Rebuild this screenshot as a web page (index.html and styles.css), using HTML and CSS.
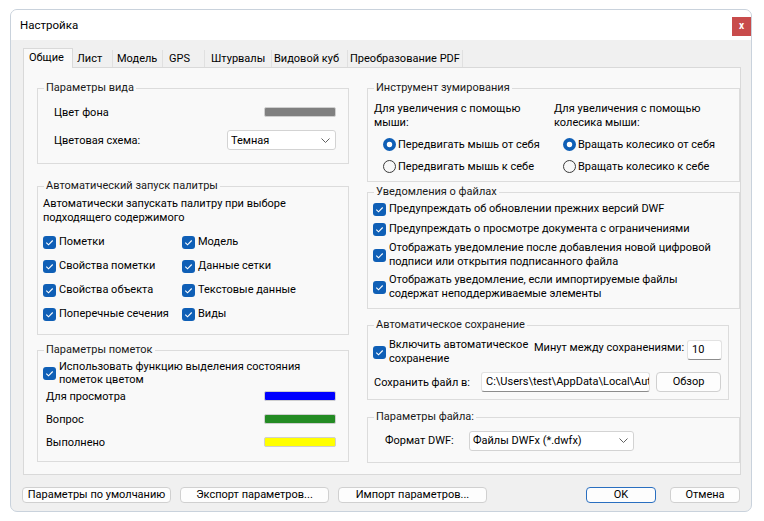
FILE: index.html
```html
<!DOCTYPE html>
<html>
<head>
    <title>Настройка</title>
    <link rel="stylesheet" href="styles.css">
</head>
<body>
<div class="dialog">
    <div class="titlebar">
        <span class="title">Настройка</span>
        <span class="close">x</span>
    </div>
    <div class="content">
        <div class="tabs">
            <span class="tab active t-general">Общие</span>
            <span class="tab t-sheet">Лист</span>
            <span class="tab t-model">Модель</span>
            <span class="tab t-gps">GPS</span>
            <span class="tab t-wheels">Штурвалы</span>
            <span class="tab t-cube">Видовой куб</span>
            <span class="tab t-pdf">Преобразование PDF</span>
        </div>
        <div class="panel">
            <div class="col col-left">
                <fieldset class="group g-view">
                    <legend>Параметры вида</legend>
                    <div class="gbody">
                        <div class="prow">
                            <span>Цвет фона</span>
                            <span class="swatch sw-grey"></span>
                        </div>
                        <div class="prow">
                            <span>Цветовая схема:</span>
                            <div class="select sel-scheme">Темная
                                <svg class="chev" width="9" height="5" viewBox="0 0 9 5"><path d="M.5.5 4.5 4.5 8.5.5" fill="none" stroke="#606060"/></svg>
                            </div>
                        </div>
                    </div>
                </fieldset>

                <fieldset class="group g-palette">
                    <legend>Автоматический запуск палитры</legend>
                    <div class="gbody">
                        <p class="desc">Автоматически запускать палитру при выборе подходящего содержимого</p>
                        <div class="cbgrid">
                            <label class="cbitem"><svg class="cb" width="13" height="13" viewBox="0 0 13 13"><rect width="13" height="13" rx="3" fill="#0f5fb6"/><path d="M3.3 6.7 5.5 8.8 9.7 4.5" fill="none" stroke="#fff" stroke-width="1.1"/></svg>Пометки</label>
                            <label class="cbitem"><svg class="cb" width="13" height="13" viewBox="0 0 13 13"><rect width="13" height="13" rx="3" fill="#0f5fb6"/><path d="M3.3 6.7 5.5 8.8 9.7 4.5" fill="none" stroke="#fff" stroke-width="1.1"/></svg>Модель</label>
                            <label class="cbitem"><svg class="cb" width="13" height="13" viewBox="0 0 13 13"><rect width="13" height="13" rx="3" fill="#0f5fb6"/><path d="M3.3 6.7 5.5 8.8 9.7 4.5" fill="none" stroke="#fff" stroke-width="1.1"/></svg>Свойства пометки</label>
                            <label class="cbitem"><svg class="cb" width="13" height="13" viewBox="0 0 13 13"><rect width="13" height="13" rx="3" fill="#0f5fb6"/><path d="M3.3 6.7 5.5 8.8 9.7 4.5" fill="none" stroke="#fff" stroke-width="1.1"/></svg>Данные сетки</label>
                            <label class="cbitem"><svg class="cb" width="13" height="13" viewBox="0 0 13 13"><rect width="13" height="13" rx="3" fill="#0f5fb6"/><path d="M3.3 6.7 5.5 8.8 9.7 4.5" fill="none" stroke="#fff" stroke-width="1.1"/></svg>Свойства объекта</label>
                            <label class="cbitem"><svg class="cb" width="13" height="13" viewBox="0 0 13 13"><rect width="13" height="13" rx="3" fill="#0f5fb6"/><path d="M3.3 6.7 5.5 8.8 9.7 4.5" fill="none" stroke="#fff" stroke-width="1.1"/></svg>Текстовые данные</label>
                            <label class="cbitem"><svg class="cb" width="13" height="13" viewBox="0 0 13 13"><rect width="13" height="13" rx="3" fill="#0f5fb6"/><path d="M3.3 6.7 5.5 8.8 9.7 4.5" fill="none" stroke="#fff" stroke-width="1.1"/></svg>Поперечные сечения</label>
                            <label class="cbitem"><svg class="cb" width="13" height="13" viewBox="0 0 13 13"><rect width="13" height="13" rx="3" fill="#0f5fb6"/><path d="M3.3 6.7 5.5 8.8 9.7 4.5" fill="none" stroke="#fff" stroke-width="1.1"/></svg>Виды</label>
                        </div>
                    </div>
                </fieldset>

                <fieldset class="group g-marks">
                    <legend>Параметры пометок</legend>
                    <div class="gbody">
                        <label class="cbitem cb-wrap"><svg class="cb" width="13" height="13" viewBox="0 0 13 13"><rect width="13" height="13" rx="3" fill="#0f5fb6"/><path d="M3.3 6.7 5.5 8.8 9.7 4.5" fill="none" stroke="#fff" stroke-width="1.1"/></svg><span>Использовать функцию выделения состояния<br>пометок цветом</span></label>
                        <div class="swrows">
                            <div class="prow">
                                <span>Для просмотра</span>
                                <span class="swatch sw-blue"></span>
                            </div>
                            <div class="prow">
                                <span>Вопрос</span>
                                <span class="swatch sw-green"></span>
                            </div>
                            <div class="prow">
                                <span>Выполнено</span>
                                <span class="swatch sw-yellow"></span>
                            </div>
                        </div>
                    </div>
                </fieldset>
            </div>

            <div class="col col-right">
                <fieldset class="group g-zoom">
                    <legend>Инструмент зумирования</legend>
                    <div class="gbody zoomcols">
                        <div class="zcol">
                            <p class="zhead">Для увеличения с помощью<br>мыши:</p>
                            <label class="rditem"><svg class="rd" width="13" height="13" viewBox="0 0 13 13"><circle cx="6.5" cy="6.5" r="6.5" fill="#0f5fb6"/><circle cx="6.5" cy="6.5" r="2.7" fill="#fff"/></svg>Передвигать мышь от себя</label>
                            <label class="rditem"><svg class="rd" width="13" height="13" viewBox="0 0 13 13"><circle cx="6.5" cy="6.5" r="6" fill="#f7f7f7" stroke="#3a3a3a"/></svg>Передвигать мышь к себе</label>
                        </div>
                        <div class="zcol">
                            <p class="zhead">Для увеличения с помощью<br>колесика мыши:</p>
                            <label class="rditem"><svg class="rd" width="13" height="13" viewBox="0 0 13 13"><circle cx="6.5" cy="6.5" r="6.5" fill="#0f5fb6"/><circle cx="6.5" cy="6.5" r="2.7" fill="#fff"/></svg>Вращать колесико от себя</label>
                            <label class="rditem"><svg class="rd" width="13" height="13" viewBox="0 0 13 13"><circle cx="6.5" cy="6.5" r="6" fill="#f7f7f7" stroke="#3a3a3a"/></svg>Вращать колесико к себе</label>
                        </div>
                    </div>
                </fieldset>

                <fieldset class="group g-notify">
                    <legend>Уведомления о файлах</legend>
                    <div class="gbody">
                        <label class="cbitem nrow"><svg class="cb" width="13" height="13" viewBox="0 0 13 13"><rect width="13" height="13" rx="3" fill="#0f5fb6"/><path d="M3.3 6.7 5.5 8.8 9.7 4.5" fill="none" stroke="#fff" stroke-width="1.1"/></svg><span>Предупреждать об обновлении прежних версий DWF</span></label>
                        <label class="cbitem nrow"><svg class="cb" width="13" height="13" viewBox="0 0 13 13"><rect width="13" height="13" rx="3" fill="#0f5fb6"/><path d="M3.3 6.7 5.5 8.8 9.7 4.5" fill="none" stroke="#fff" stroke-width="1.1"/></svg><span>Предупреждать о просмотре документа с ограничениями</span></label>
                        <label class="cbitem nrow nrow-2"><svg class="cb" width="13" height="13" viewBox="0 0 13 13"><rect width="13" height="13" rx="3" fill="#0f5fb6"/><path d="M3.3 6.7 5.5 8.8 9.7 4.5" fill="none" stroke="#fff" stroke-width="1.1"/></svg><span>Отображать уведомление после добавления новой цифровой<br>подписи или открытия подписанного файла</span></label>
                        <label class="cbitem nrow nrow-2"><svg class="cb" width="13" height="13" viewBox="0 0 13 13"><rect width="13" height="13" rx="3" fill="#0f5fb6"/><path d="M3.3 6.7 5.5 8.8 9.7 4.5" fill="none" stroke="#fff" stroke-width="1.1"/></svg><span>Отображать уведомление, если импортируемые файлы<br>содержат неподдерживаемые элементы</span></label>
                    </div>
                </fieldset>

                <fieldset class="group g-autosave">
                    <legend>Автоматическое сохранение</legend>
                    <div class="gbody">
                        <div class="asrow">
                            <label class="cbitem as-check"><svg class="cb" width="13" height="13" viewBox="0 0 13 13"><rect width="13" height="13" rx="3" fill="#0f5fb6"/><path d="M3.3 6.7 5.5 8.8 9.7 4.5" fill="none" stroke="#fff" stroke-width="1.1"/></svg><span>Включить автоматическое<br>сохранение</span></label>
                            <span class="as-minutes">Минут между сохранениями:</span>
                            <div class="field field-num">10</div>
                        </div>
                        <div class="pathrow">
                            <span class="path-label">Сохранить файл в:</span>
                            <div class="field field-path">C:\Users\test\AppData\Local\Aut</div>
                            <button class="btn btn-browse">Обзор</button>
                        </div>
                    </div>
                </fieldset>

                <fieldset class="group g-file">
                    <legend>Параметры файла:</legend>
                    <div class="gbody">
                        <div class="fmtrow">
                            <span class="fmt-label">Формат DWF:</span>
                            <div class="select sel-format">Файлы DWFx (*.dwfx)
                                <svg class="chev" width="9" height="5" viewBox="0 0 9 5"><path d="M.5.5 4.5 4.5 8.5.5" fill="none" stroke="#606060"/></svg>
                            </div>
                        </div>
                    </div>
                </fieldset>
            </div>
        </div>

        <div class="footer">
            <button class="btn btn-wide">Параметры по умолчанию</button>
            <button class="btn btn-wide">Экспорт параметров...</button>
            <button class="btn btn-wide">Импорт параметров...</button>
            <button class="btn btn-small btn-ok">OK</button>
            <button class="btn btn-small btn-cancel">Отмена</button>
        </div>
    </div>
</div>
</body>
</html>
```

FILE: styles.css
```css
/* Диалог настройки */
* {
    box-sizing: border-box;
}
body {
    margin: 0;
    padding: 9px 0 0 10px;
    background: #ffffff;
    font-family: Roboto, 'Noto Sans', sans-serif;
    font-size: 11px;
    color: #000;
}
p {
    margin: 0;
}
.dialog {
    width: 742px;
    height: 503px;
    border: 1px solid #c9d2dc;
    border-radius: 7px;
    background: #f0f0f0;
    overflow: hidden;
    display: flex;
    flex-direction: column;
}
.titlebar {
    height: 30px;
    flex: none;
    background: #ffffff;
    display: flex;
    justify-content: space-between;
    align-items: flex-start;
    padding-left: 9px;
}
.title {
    line-height: 30px;
    font-size: 11.5px;
}
.close {
    width: 19px;
    height: 19px;
    margin-top: 7px;
    background: #c84b4b;
    color: #fff;
    font-size: 10px;
    font-weight: bold;
    display: flex;
    align-items: center;
    justify-content: center;
    padding-bottom: 2px;
}
.content {
    flex: 1;
    padding: 8px 10px 0 12px;
}

/* вкладки */
.tabs {
    display: flex;
    align-items: flex-end;
    height: 19px;
}
.tab {
    height: 17px;
    line-height: 18px;
    padding: 0 4px;
    border-right: 1px solid #e0e0e0;
    white-space: nowrap;
}
.tab.active {
    height: 20px;
    line-height: 17px;
    padding: 0 5px;
    background: #f9f9f9;
    border: 1px solid #d9d9d9;
    border-bottom: none;
    margin-bottom: -1px;
    position: relative;
    z-index: 1;
}
.t-general { width: 50px; }
.t-sheet { width: 40px; }
.t-model { width: 50px; }
.t-gps { width: 42px; padding-left: 6px; }
.t-wheels { width: 67px; padding-left: 6px; }
.t-cube { width: 76px; padding-left: 2px; }
.t-pdf { width: 115px; padding-left: 2px; }

.panel {
    height: 408px;
    border: 1px solid #d9d9d9;
    background: #f9f9f9;
    display: flex;
    gap: 18px;
    padding: 12px 0 0 13px;
}
.col {
    display: flex;
    flex-direction: column;
}
.col-left {
    width: 312px;
}
.col-right {
    width: 373px;
}

/* группы */
.group {
    margin: 0;
    padding: 0;
    border: 1px solid #dcdcdc;
    min-width: 0;
}
.group legend {
    margin-left: 6px;
    padding: 0 2px;
    line-height: 16px;
    color: #1a1a1a;
}
.gbody {
    display: flex;
    flex-direction: column;
}
.prow {
    display: flex;
    justify-content: space-between;
    align-items: center;
    height: 20px;
}
.swatch {
    width: 72px;
    height: 10px;
    border: 1px solid #cfcfcf;
    border-radius: 2px;
}
.sw-grey { background: #808080; }
.sw-blue { background: #0000ff; }
.sw-green { background: #238b23; }
.sw-yellow { background: #ffff00; }

.select {
    height: 20px;
    background: #ffffff;
    border: 1px solid #d3d3d3;
    border-radius: 3px;
    display: flex;
    align-items: center;
    justify-content: space-between;
    padding: 0 5px 0 3px;
}
.sel-scheme {
    width: 109px;
}
.sel-format {
    width: 165px;
}

.cb, .rd {
    flex: none;
}
.cbitem {
    display: flex;
    align-items: center;
    gap: 3px;
    line-height: 14px;
}
.rditem {
    display: flex;
    align-items: center;
    gap: 2px;
    height: 22px;
    padding-left: 9px;
}

.g-view .gbody {
    padding: 6px 12px 13px 16px;
    gap: 8px;
}
.g-palette {
    margin-top: 14px;
}
.g-palette .gbody {
    padding: 3px 10px 8px 5px;
}
.desc {
    line-height: 14px;
    width: 250px;
}
.cbgrid {
    display: grid;
    grid-template-columns: 139px 1fr;
    grid-auto-rows: 24px;
    margin-top: 5px;
}
.g-marks {
    margin-top: 7px;
}
.g-marks .gbody {
    padding: 2px 12px 9px 5px;
}
.cb-wrap {
    line-height: 13px;
}
.swrows {
    display: flex;
    flex-direction: column;
    gap: 3px;
    padding-left: 3px;
}

.g-zoom .gbody {
    padding: 6px 4px 4px 6px;
}
.zoomcols {
    flex-direction: row !important;
}
.zcol {
    width: 180px;
}
.zhead {
    line-height: 14px;
    margin-bottom: 3px;
}
.g-notify {
    margin-top: 2px;
}
.g-notify .gbody {
    padding: 0 4px 6px 5px;
    gap: 2px;
}
.nrow {
    height: 18px;
}
.nrow-2 {
    height: 30px;
}
.g-autosave {
    margin-top: 8px;
    width: 362px;
}
.g-autosave .gbody {
    padding: 5px 6px 7px 5px;
    gap: 6px;
}
.asrow {
    display: flex;
    align-items: flex-start;
}
.as-check {
    width: 161px;
    height: 28px;
    flex: none;
}
.as-minutes {
    margin-top: 3px;
    white-space: nowrap;
}
.field {
    height: 20px;
    background: #ffffff;
    border: 1px solid #e2e2e2;
    border-bottom-color: #8c8c8c;
    border-radius: 3px;
    line-height: 18px;
    padding: 0 4px;
    white-space: nowrap;
    overflow: hidden;
}
.field-num {
    width: 35px;
    margin-left: auto;
    margin-top: 2px;
}
.pathrow {
    display: flex;
    align-items: center;
    height: 20px;
}
.path-label {
    width: 108px;
    padding-left: 1px;
}
.field-path {
    width: 169px;
}
.g-file {
    margin-top: 9px;
}
.g-file .gbody {
    padding: 5px 6px 11px 17px;
}
.fmtrow {
    display: flex;
    align-items: center;
    height: 21px;
}
.fmt-label {
    width: 84px;
}

/* кнопки */
.btn {
    font-family: inherit;
    font-size: 11px;
    color: #000;
    background: #fdfdfd;
    border: 1px solid #d0d0d0;
    border-radius: 4px;
    padding: 0;
    line-height: 14px;
}
.btn-browse {
    width: 65px;
    height: 20px;
    margin-left: 6px;
}
.footer {
    display: flex;
    gap: 9px;
    margin-top: 12px;
    margin-left: -1px;
    margin-right: 1px;
}
.btn-wide {
    width: 149px;
    height: 16px;
}
.btn-small {
    width: 70px;
    height: 16px;
}
.btn-ok {
    margin-left: auto;
    border-color: #2a6fc0;
}
.btn-cancel {
    margin-left: 5px;
}
```
